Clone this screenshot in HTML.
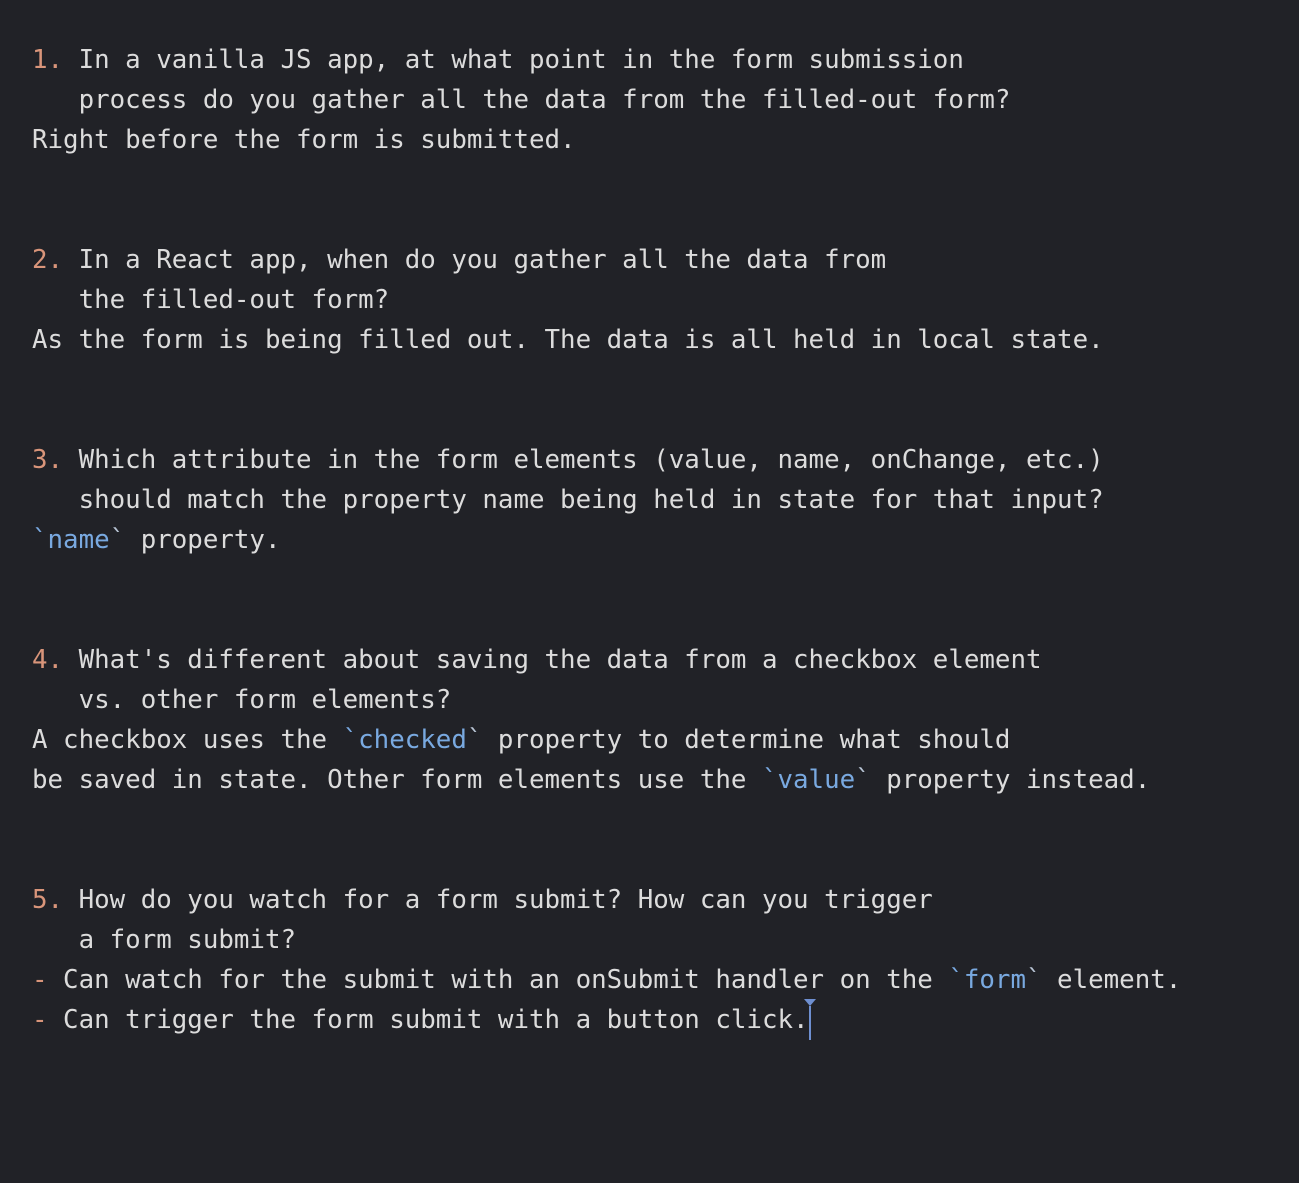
<!DOCTYPE html>
<html><head><meta charset="utf-8"><style>
html,body{margin:0;padding:0;background:#212227;}
body{width:1299px;height:1183px;position:relative;overflow:hidden;font-family:"DejaVu Sans Mono","Liberation Mono",monospace;font-size:25.8px;color:#dcdcdc;}
.l{position:absolute;left:32px;height:40px;line-height:40px;white-space:pre;}
.n{color:#d9957a}
.c{color:#79a9e0}
.t{color:#b8c4d4}
.cur{position:absolute;left:809px;top:1006px;width:2px;height:34px;background:#6e8fd0;}
.tri{position:absolute;left:804px;top:999px;width:0;height:0;border-left:6px solid transparent;border-right:6px solid transparent;border-top:7px solid #6e8fd0;}
</style></head><body>
<div class="l" style="top:40px"><span class="n">1.</span> In a vanilla JS app, at what point in the form submission</div>
<div class="l" style="top:80px">   process do you gather all the data from the filled-out form?</div>
<div class="l" style="top:120px">Right before the form is submitted.</div>

<div class="l" style="top:240px"><span class="n">2.</span> In a React app, when do you gather all the data from</div>
<div class="l" style="top:280px">   the filled-out form?</div>
<div class="l" style="top:320px">As the form is being filled out. The data is all held in local state.</div>

<div class="l" style="top:440px"><span class="n">3.</span> Which attribute in the form elements (value, name, onChange, etc.)</div>
<div class="l" style="top:480px">   should match the property name being held in state for that input?</div>
<div class="l" style="top:520px"><span class="c">`name</span><span class="t">`</span> property.</div>

<div class="l" style="top:640px"><span class="n">4.</span> What's different about saving the data from a checkbox element</div>
<div class="l" style="top:680px">   vs. other form elements?</div>
<div class="l" style="top:720px">A checkbox uses the <span class="c">`checked</span><span class="t">`</span> property to determine what should</div>
<div class="l" style="top:760px">be saved in state. Other form elements use the <span class="c">`value</span><span class="t">`</span> property instead.</div>

<div class="l" style="top:880px"><span class="n">5.</span> How do you watch for a form submit? How can you trigger</div>
<div class="l" style="top:920px">   a form submit?</div>
<div class="l" style="top:960px"><span class="n">-</span> Can watch for the submit with an onSubmit handler on the <span class="c">`form</span><span class="t">`</span> element.</div>
<div class="l" style="top:1000px"><span class="n">-</span> Can trigger the form submit with a button click.</div>
<div class="tri"></div><div class="cur"></div>
</body></html>
